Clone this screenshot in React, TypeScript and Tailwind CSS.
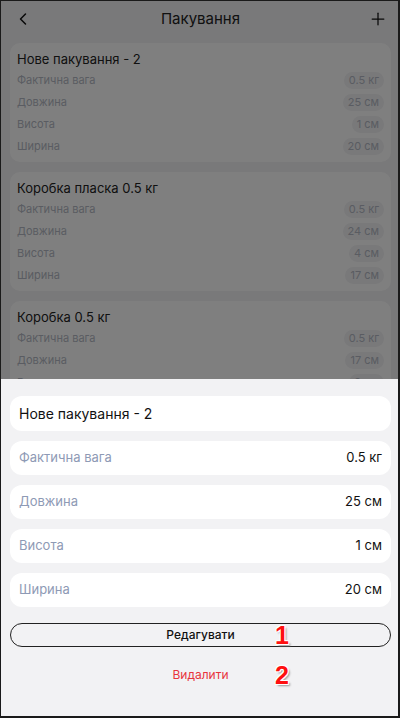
import { ChevronLeft, Plus } from 'lucide-react';

const packs = [
  { name: 'Нове пакування - 2', rows: [['Фактична вага', '0.5 кг'], ['Довжина', '25 см'], ['Висота', '1 см'], ['Ширина', '20 см']] },
  { name: 'Коробка пласка 0.5 кг', rows: [['Фактична вага', '0.5 кг'], ['Довжина', '24 см'], ['Висота', '4 см'], ['Ширина', '17 см']] },
  { name: 'Коробка 0.5 кг', rows: [['Фактична вага', '0.5 кг'], ['Довжина', '17 см'], ['Висота', '9 см'], ['Ширина', '12 см']] },
];

const details = [
  ['Фактична вага', '0.5 кг'],
  ['Довжина', '25 см'],
  ['Висота', '1 см'],
  ['Ширина', '20 см'],
];

function Marker({ n }: { n: string }) {
  return (
    <span
      className="absolute left-[265px] text-[25px] font-bold leading-none text-[#ff1010] [text-shadow:_1px_1px_0_#fff,_-1px_-1px_0_#fff,_1px_-1px_0_#fff,_-1px_1px_0_#fff,_2px_2px_2px_#999]"
      style={{ fontFamily: 'Arial, "Liberation Sans", sans-serif' }}
    >
      {n}
    </span>
  );
}

export default function App() {
  return (
    <div
      className="relative w-[400px] h-[718px] overflow-hidden bg-[#f2f2f4] border-t border-l border-r-2 border-b-2 border-[#1a1a1a]"
      style={{ fontFamily: 'Inter, "Noto Sans", sans-serif' }}
    >
      {/* Header */}
      <header className="h-[36px] flex items-center justify-between pl-[12px] pr-[10px]">
        <ChevronLeft size={20} strokeWidth={1.8} className="text-[#111]" />
        <span className="text-[15px] text-[#222]">Пакування</span>
        <Plus size={20} strokeWidth={1.5} className="text-[#111]" />
      </header>

      {/* List */}
      <div className="flex flex-col gap-[10px] pl-[9px] pr-[7px] pt-[6px]">
        {packs.map((p) => (
          <div key={p.name} className="bg-white rounded-[10px] px-[7px] pt-[8px] pb-[5px]">
            <div className="text-[13px] text-[#222] leading-[16px] mb-[2px]">{p.name}</div>
            {p.rows.map(([l, v]) => (
              <div key={l} className="h-[22px] flex items-center justify-between">
                <span className="text-[11px] text-[#b4b9c4]">{l}</span>
                <span className="text-[11px] text-[#b4b9c4] bg-[#f2f2f4] rounded-full px-[5px] h-[17px] flex items-center">{v}</span>
              </div>
            ))}
          </div>
        ))}
      </div>

      {/* Overlay */}
      <div className="absolute inset-0 bg-black/50" />

      {/* Bottom sheet */}
      <div className="absolute left-0 right-0 bottom-0 h-[337px] bg-[#f2f2f4] pl-[9px] pr-[7px] pt-[17px]">
        <div className="flex flex-col gap-[10px]">
          <div className="h-[35px] bg-white rounded-[12px] flex items-center px-[9px] text-[14px] text-[#111]">
            Нове пакування - 2
          </div>
          {details.map(([l, v]) => (
            <div key={l} className="h-[34px] bg-white rounded-[12px] flex items-center justify-between px-[9px]">
              <span className="text-[13px] text-[#8e9ab5]">{l}</span>
              <span className="text-[13px] text-[#111]">{v}</span>
            </div>
          ))}
        </div>
        <div className="relative mt-[16px] h-[24px] flex items-center">
          <button className="w-full h-[24px] rounded-full border border-[#222] text-[12px] font-medium text-[#111]">
            Редагувати
          </button>
          <Marker n="1" />
        </div>
        <div className="relative mt-[16px] h-[24px] flex items-center justify-center">
          <span className="text-[12px] text-[#e8343c]">Видалити</span>
          <Marker n="2" />
        </div>
      </div>
    </div>
  );
}
